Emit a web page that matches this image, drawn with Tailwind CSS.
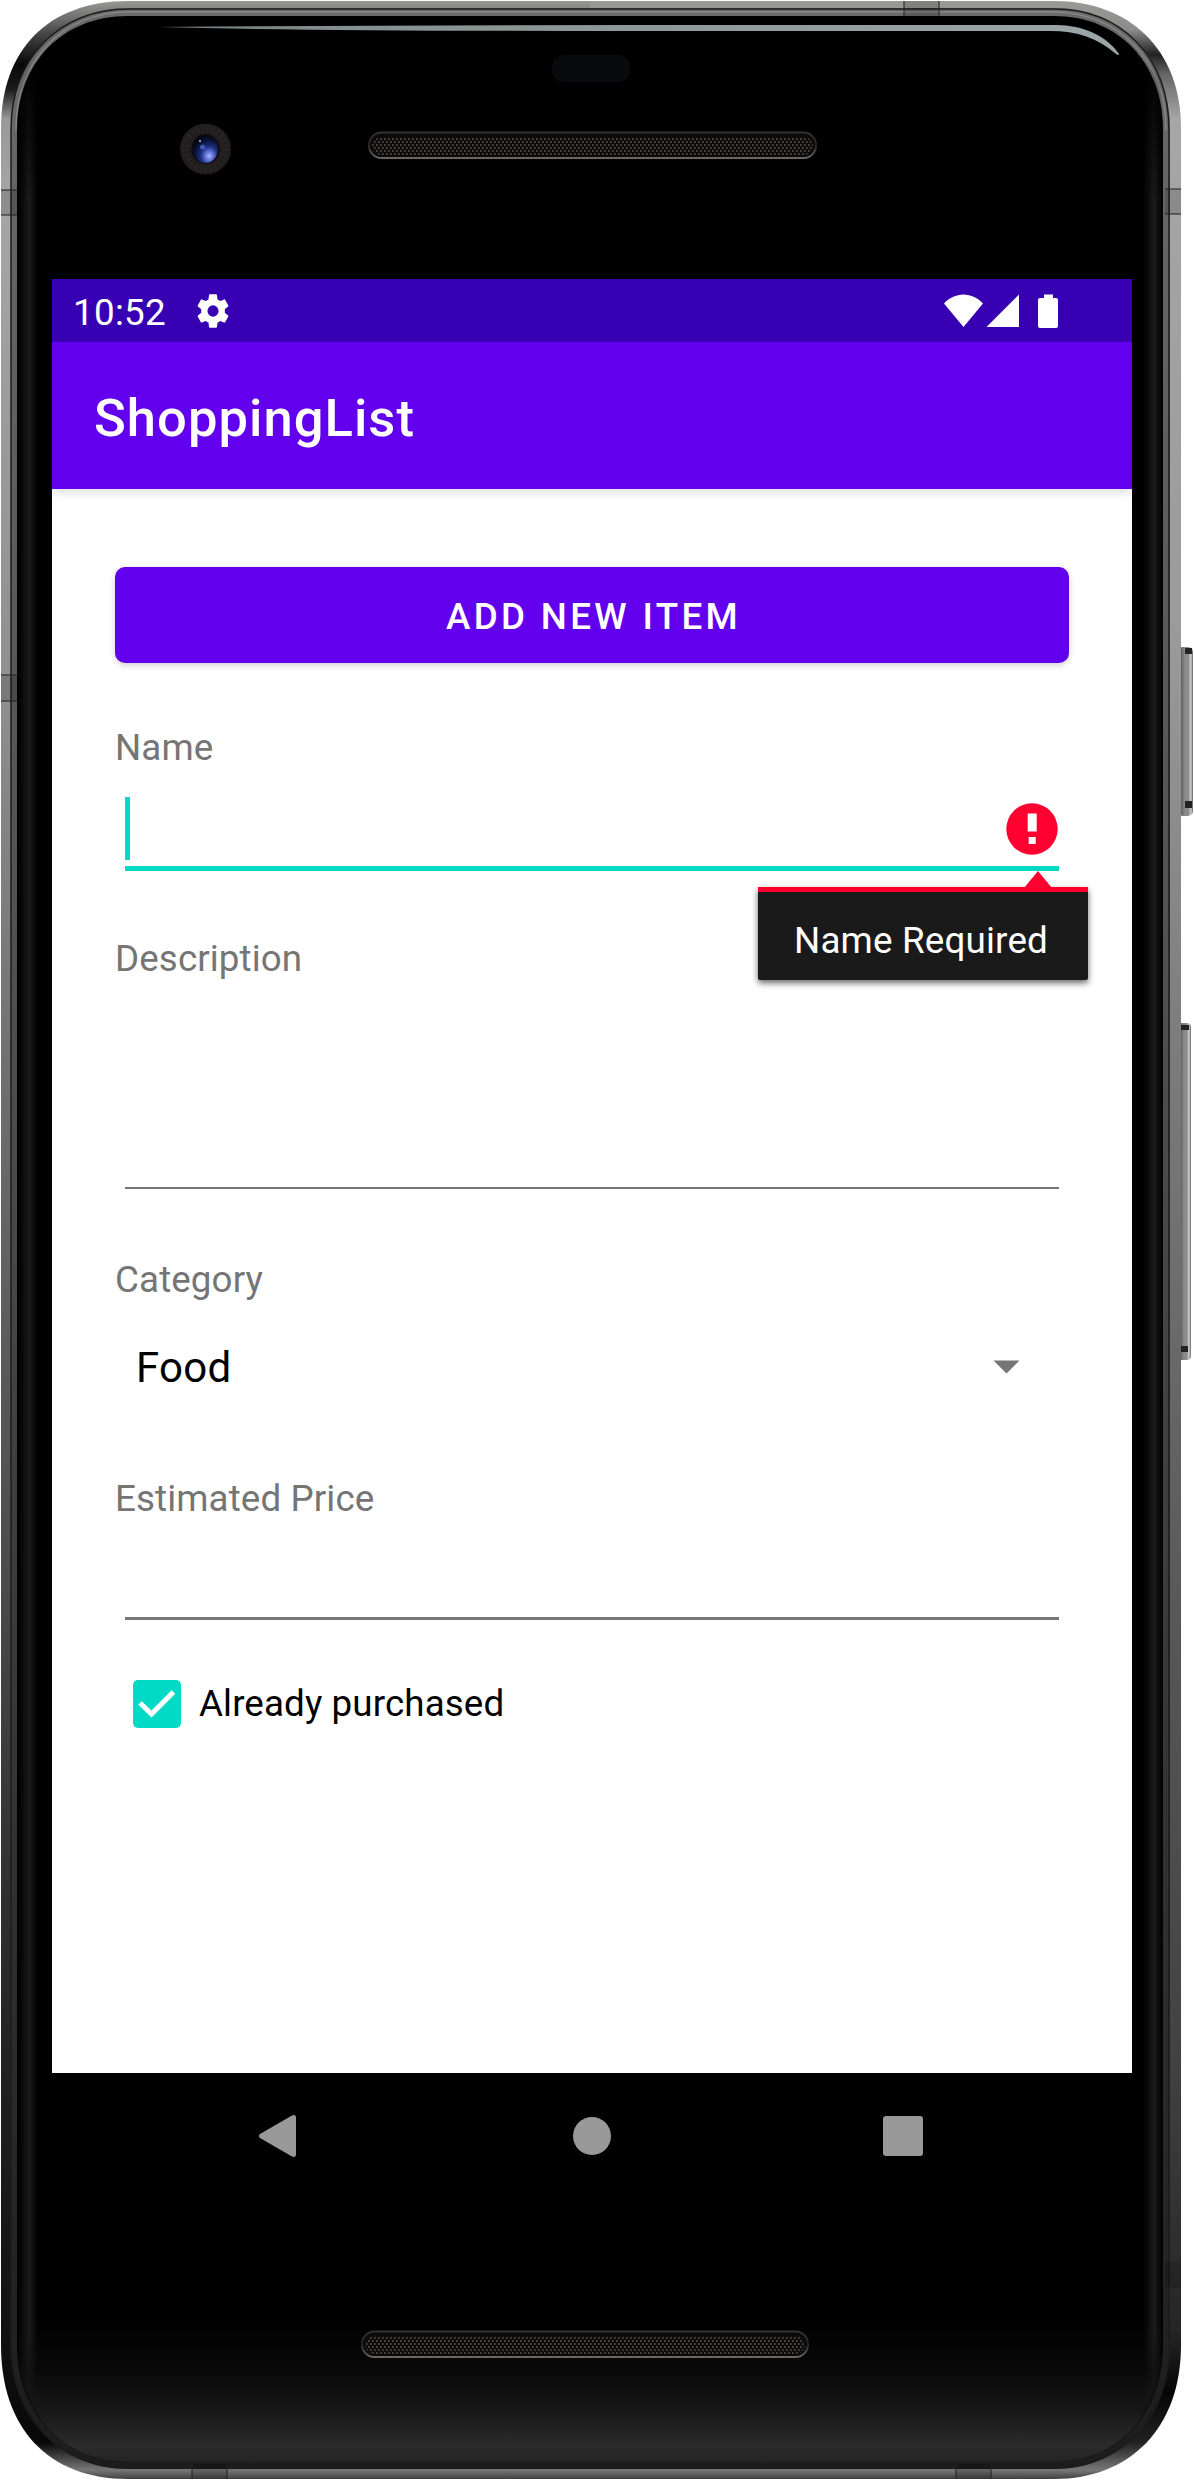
<!DOCTYPE html>
<html lang="en">
<head>
<meta charset="utf-8">
<title>ShoppingList</title>
<script src="https://cdn.jsdelivr.net/npm/@tailwindcss/browser@4"></script>
</head>
<body class="bg-white">
<div class="relative w-[1194px] h-[2480px] overflow-hidden font-[Roboto,sans-serif]">
  <!-- phone body -->
  <svg class="absolute inset-0" width="1194" height="2480" viewBox="0 0 1194 2480" fill="none">
    <defs>
      <linearGradient id="rimL" x1="0" y1="0" x2="0" y2="2480" gradientUnits="userSpaceOnUse">
        <stop offset="0" stop-color="#9a9a98"/><stop offset=".006" stop-color="#777"/><stop offset=".014" stop-color="#444"/><stop offset=".026" stop-color="#080808"/><stop offset=".036" stop-color="#1a1a1a"/><stop offset=".048" stop-color="#999"/><stop offset=".08" stop-color="#a6a6a6"/><stop offset=".28" stop-color="#8f8f8f"/><stop offset=".45" stop-color="#6c6c6c"/><stop offset=".65" stop-color="#484848"/><stop offset=".83" stop-color="#222"/><stop offset=".94" stop-color="#111"/><stop offset=".985" stop-color="#080808"/><stop offset=".996" stop-color="#777"/><stop offset="1" stop-color="#3a3a3a"/>
      </linearGradient>
      <linearGradient id="rimR" x1="0" y1="0" x2="0" y2="2480" gradientUnits="userSpaceOnUse">
        <stop offset="0" stop-color="#9a9a98"/><stop offset=".012" stop-color="#8c8c8c"/><stop offset=".022" stop-color="#222"/><stop offset=".03" stop-color="#666"/><stop offset=".048" stop-color="#a6a6a6"/><stop offset=".25" stop-color="#9b9b9b"/><stop offset=".4" stop-color="#808080"/><stop offset=".65" stop-color="#585858"/><stop offset=".83" stop-color="#424242"/><stop offset=".94" stop-color="#252525"/><stop offset=".965" stop-color="#050505"/><stop offset=".985" stop-color="#222"/><stop offset=".996" stop-color="#777"/><stop offset="1" stop-color="#3a3a3a"/>
      </linearGradient>
      <linearGradient id="edge" x1="0" y1="0" x2="0" y2="2480" gradientUnits="userSpaceOnUse">
        <stop offset="0" stop-color="#6a6a6a"/><stop offset=".4" stop-color="#505050"/><stop offset="1" stop-color="#1c1c1c"/>
      </linearGradient>
      <linearGradient id="chin" x1="0" y1="2320" x2="0" y2="2462" gradientUnits="userSpaceOnUse">
        <stop offset="0" stop-color="#2b2b2b" stop-opacity="0"/><stop offset=".35" stop-color="#2b2b2b" stop-opacity=".2"/><stop offset=".65" stop-color="#2b2b2b" stop-opacity=".55"/><stop offset=".88" stop-color="#2b2b2b"/><stop offset="1" stop-color="#242424"/>
      </linearGradient>
      <linearGradient id="glow">
        <stop offset="0" stop-color="#1b1b1b" stop-opacity="0"/><stop offset=".25" stop-color="#1b1b1b" stop-opacity=".4"/><stop offset=".55" stop-color="#1b1b1b"/><stop offset="1" stop-color="#1b1b1b" stop-opacity="0"/>
      </linearGradient>
      <linearGradient id="fadeY" x1="0" y1="60" x2="0" y2="2430" gradientUnits="userSpaceOnUse">
        <stop offset="0" stop-color="#000"/><stop offset=".06" stop-color="#fff"/><stop offset=".96" stop-color="#fff"/><stop offset="1" stop-color="#000"/>
      </linearGradient>
      <mask id="fade" maskUnits="userSpaceOnUse" x="0" y="0" width="1194" height="2480"><rect width="1194" height="2480" fill="url(#fadeY)"/></mask>
      <linearGradient id="shine" x1="159" y1="0" x2="1120" y2="0" gradientUnits="userSpaceOnUse">
        <stop offset="0" stop-color="#6d7a7a"/><stop offset=".2" stop-color="#86908f"/><stop offset="1" stop-color="#9ba6a8"/>
      </linearGradient>
      <linearGradient id="key" x1="0" x2="1">
        <stop offset="0" stop-color="#555"/><stop offset=".25" stop-color="#666"/><stop offset=".45" stop-color="#8a8a8a"/><stop offset=".7" stop-color="#8c8c8c"/><stop offset=".8" stop-color="#c4c4c4"/><stop offset=".92" stop-color="#b0b0b0"/><stop offset="1" stop-color="#555"/>
      </linearGradient>
      <radialGradient id="lens" cx=".65" cy=".75" r=".75">
        <stop offset="0" stop-color="#aab8ff"/><stop offset=".2" stop-color="#6577d8"/><stop offset=".45" stop-color="#1c2f80"/><stop offset=".75" stop-color="#0a1238"/><stop offset="1" stop-color="#05060c"/>
      </radialGradient>
      <pattern id="mesh" width="4" height="6" patternUnits="userSpaceOnUse">
        <rect width="4" height="6" fill="#0d0c0a"/><rect x="0" y="0" width="1.6" height="2" fill="#4a463f"/><rect x="2" y="3" width="1.6" height="2" fill="#4a463f"/>
      </pattern>
      <linearGradient id="lip" x1="0" y1="0" x2="0" y2="1">
        <stop offset="0" stop-color="#333"/><stop offset=".5" stop-color="#222"/><stop offset="1" stop-color="#6b6761"/>
      </linearGradient>
      <clipPath id="left"><rect width="590" height="2480"/></clipPath>
      <clipPath id="right"><rect x="590" width="604" height="2480"/></clipPath>
    </defs>
    <!-- side keys -->
    <rect x="1178" y="647" width="15" height="169" rx="5" fill="url(#key)"/>
    <rect x="1185" y="648" width="7" height="6" fill="#222"/><rect x="1185" y="801" width="7" height="7" fill="#222"/>
    <rect x="1178" y="1023" width="13" height="337" rx="4" fill="url(#key)"/>
    <rect x="1181" y="1025" width="8" height="5" fill="#222"/><rect x="1181" y="1346" width="7" height="6" fill="#222"/>
    <!-- metal rim -->
    <path clip-path="url(#left)" fill="url(#rimL)" d="M128 1H1054C1130 1 1181 50 1181 128V2345C1181 2428 1130 2479 1054 2479H128C48 2479 1 2428 1 2345V128C1 50 48 1 128 1Z"/>
    <path clip-path="url(#right)" fill="url(#rimR)" d="M128 1H1054C1130 1 1181 50 1181 128V2345C1181 2428 1130 2479 1054 2479H128C48 2479 1 2428 1 2345V128C1 50 48 1 128 1Z"/>
    <path fill="url(#edge)" d="M128 8H1054C1122 8 1170 58 1170 130V2345C1170 2418 1122 2469 1054 2469H128C60 2469 11 2418 11 2345V130C11 58 60 8 128 8Z"/>
    <path stroke="#1c1c1c" stroke-width="1.5" d="M128 9H1054C1122 9 1169 58 1169 130V2345C1169 2417 1122 2468 1054 2468H128C60 2468 11 2417 11 2345V130C11 58 60 9 128 9Z"/>
    <path stroke="#bdbdbd" stroke-opacity=".35" stroke-width="1.5" d="M16 130C16 60 63 12 128 12H1054C1118 12 1166 60 1166 130"/>
    <path fill="#000" d="M128 16H1054C1118 16 1163 62 1163 130V2345C1163 2414 1118 2462 1054 2462H128C63 2462 17 2414 17 2345V130C17 62 63 16 128 16Z"/>
    <!-- antenna bands -->
    <path fill="#000" fill-opacity=".15" d="M1 190H17V215H1ZM1 675H18V701H1ZM1165 189H1181V214H1165ZM904 1H939V16H904ZM1165 2262H1181V2288H1165ZM192 2464H227V2479H192ZM956 2464H991V2479H956Z"/>
    <path stroke="#222" stroke-opacity=".7" stroke-width="1.5" d="M1 190H17M1 215H17M1 675H18M1 701H18M1165 189H1181M1165 214H1181M904 1V16M939 1V16M1165 2262H1181M1165 2288H1181M192 2464V2479M227 2464V2479M956 2464V2479M991 2464V2479"/>
    <!-- glass edge reflections -->
    <path fill="url(#chin)" d="M18 2320H1162V2345C1162 2414 1118 2462 1054 2462H128C63 2462 18 2414 18 2345Z"/>
    <g mask="url(#fade)">
      <rect x="18" y="60" width="20" height="2370" fill="url(#glow)"/>
      <rect x="1143" y="60" width="20" height="2370" fill="url(#glow)"/>
    </g>
    <path fill="url(#shine)" d="M159 27Q380 25 640 25H1056C1083 25 1107 36 1119 54Q1119 56 1116 54C1098 38 1077 31 1050 31H640Q300 31 159 27Z"/>
    <!-- proximity sensor, camera, earpiece, loudspeaker -->
    <rect x="552" y="55" width="78" height="27" rx="12" fill="#090a0e"/>
    <circle cx="205.5" cy="149" r="25.5" fill="#211d1e"/>
    <circle cx="205.5" cy="149" r="20" stroke="#282425" stroke-width="7" stroke-dasharray="2 3"/>
    <ellipse cx="205.5" cy="149" rx="14" ry="15" fill="#0a0a10"/>
    <ellipse cx="205.5" cy="149" rx="12.5" ry="14" fill="url(#lens)"/>
    <circle cx="202.5" cy="147" r="2.5" fill="#5a6fe0" fill-opacity=".7"/><circle cx="200" cy="141" r="1" fill="#b9c2ff"/>
    <rect x="369" y="132.5" width="447" height="25.5" rx="12.5" fill="#0b0b0b" stroke="url(#lip)" stroke-width="2"/>
    <rect x="372" y="137" width="441" height="18" rx="9" fill="url(#mesh)"/>
    <rect x="362" y="2331.5" width="446" height="25.5" rx="12.5" fill="#0b0b0b" stroke="url(#lip)" stroke-width="2"/>
    <rect x="365" y="2336" width="440" height="18" rx="9" fill="url(#mesh)"/>
  </svg>

  <!-- display -->
  <main class="relative mt-[279px] ml-[52px] flex h-[1920px] w-[1080px] flex-col">
    <div class="z-20 flex h-[63px] shrink-0 items-center bg-[#3700b3] pl-[21px] text-white">
      <span class="mt-[3px] w-[95px] text-[36.75px] leading-[49px] tracking-[0.008em]">10:52</span>
      <svg class="ml-[26px]" width="38" height="40" viewBox="0 0 24 24" preserveAspectRatio="none" fill="#fff"><path d="M19.43 12.98c.04-.32.07-.64.07-.98s-.03-.66-.07-.98l2.11-1.65c.19-.15.24-.42.12-.64l-2-3.46c-.12-.22-.39-.3-.61-.22l-2.49 1c-.52-.4-1.08-.73-1.69-.98l-.38-2.65C14.46 2.18 14.25 2 14 2h-4c-.25 0-.46.18-.49.42l-.38 2.65c-.61.25-1.17.59-1.69.98l-2.49-1c-.23-.09-.49 0-.61.22l-2 3.46c-.13.22-.07.49.12.64l2.11 1.65c-.04.32-.07.65-.07.98s.03.66.07.98l-2.11 1.65c-.19.15-.24.42-.12.64l2 3.46c.12.22.39.3.61.22l2.49-1c.52.4 1.08.73 1.69.98l.38 2.65c.03.24.24.42.49.42h4c.25 0 .46-.18.49-.42l.38-2.65c.61-.25 1.17-.59 1.69-.98l2.49 1c.23.09.49 0 .61-.22l2-3.46c.12-.22.07-.49-.12-.64zM12 15.5a3.5 3.5 0 1 1 0-7 3.5 3.5 0 0 1 0 7z"/></svg>
      <svg class="mr-[74px] ml-auto" width="114" height="34" viewBox="0 0 114 34" fill="#fff"><path d="M0 9.500C5 4 12 .5 19.500 .5S34 4 39 9.500L19.500 33ZM42.500 33L75 .5V33ZM94 6a2 2 0 0 1 2-2h4V.5h9V4h3a2 2 0 0 1 2 2V32a2 2 0 0 1-2 2H96a2 2 0 0 1-2-2Z"/></svg>
    </div>
    <header class="z-10 flex h-[147px] shrink-0 items-center bg-[#6200ee] pl-[42px] shadow-[0_3px_10px_rgba(0,0,0,.15)]">
      <h1 class="mt-[4px] text-[52.5px] leading-[70px] font-medium tracking-[0.02em] text-white">ShoppingList</h1>
    </header>
    <section class="flex h-[1584px] shrink-0 flex-col bg-white px-[63px] pt-[78px] text-[36.75px] leading-[49px] tracking-[0.003em] text-[#757575]">
      <button class="flex h-24 shrink-0 items-center justify-center rounded-[10px] bg-[#6200ee] pl-[3px] font-medium tracking-[0.091em] text-white shadow-[0_2px_6px_rgba(0,0,0,.2)]"><span class="mt-[2px]">ADD NEW ITEM</span></button>
      <label class="mt-[60px]">Name</label>
      <div class="relative mx-[10px] mt-[25px] flex h-[74px] shrink-0 items-start justify-between border-b-[5px] border-[#03dac5]">
        <i class="h-[63px] w-[5px] bg-[#03dac5]"></i>
        <svg class="mt-[5px]" width="54" height="54" viewBox="0 0 54 54"><circle cx="27" cy="27" r="25.7" fill="#ff0031"/><path fill="#fff" d="M22.700 11.500h9V29.500h-9ZM23.700 35h7v7h-7Z"/></svg>
        <div class="absolute top-[90px] -right-[29px] flex h-[93px] w-[330px] items-center rounded-b-[2px] border-t-[5px] border-[#ff0031] bg-[#1a1a1a] pl-[36px] tracking-[0.005em] text-white shadow-[0_3px_6px_rgba(0,0,0,.6)]">
          <span class="mt-[8px] whitespace-nowrap">Name Required</span>
          <svg class="absolute -top-[21px] right-[36px]" width="28" height="17" viewBox="0 0 28 17"><path fill="#ff0031" d="M14 0 28 17H0Z"/></svg>
        </div>
      </div>
      <label class="mt-[63px]">Description</label>
      <div class="mx-[10px] h-[206px] shrink-0 border-b-[2.500px] border-[#777]"></div>
      <label class="mt-[66px]">Category</label>
      <div class="mt-[28px] flex h-[70px] shrink-0 items-center justify-between pr-[49px] pl-[21px] text-[42px] tracking-[0.007em] text-black">
        <span>Food</span>
        <svg width="27" height="14" viewBox="0 0 27 14"><path fill="#757575" d="M.5 .5h26L13.500 13.500Z"/></svg>
      </div>
      <label class="mt-[72px]">Estimated Price</label>
      <div class="mx-[10px] h-[97px] shrink-0 border-b-[3px] border-[#777]"></div>
      <div class="mt-[59px] flex items-center pl-[18px] text-black">
        <svg width="48" height="48" viewBox="0 0 48 48"><rect width="48" height="48" rx="5" fill="#03dac5"/><path d="M7 23 18.500 34 40.500 12" fill="none" stroke="#fff" stroke-width="5"/></svg>
        <span class="ml-[18px]">Already purchased</span>
      </div>
    </section>
    <nav class="h-[126px] shrink-0 bg-black">
      <svg width="1080" height="126" viewBox="0 0 1080 126" fill="#999"><path d="M208 61 240 42.500Q244 41 244 45V81Q244 85 240 83.500L208 65Q206 63 208 61Z"/><circle cx="540" cy="63" r="19"/><rect x="831" y="43" width="40" height="40" rx="3"/></svg>
    </nav>
  </main>
</div>
</body>
</html>
